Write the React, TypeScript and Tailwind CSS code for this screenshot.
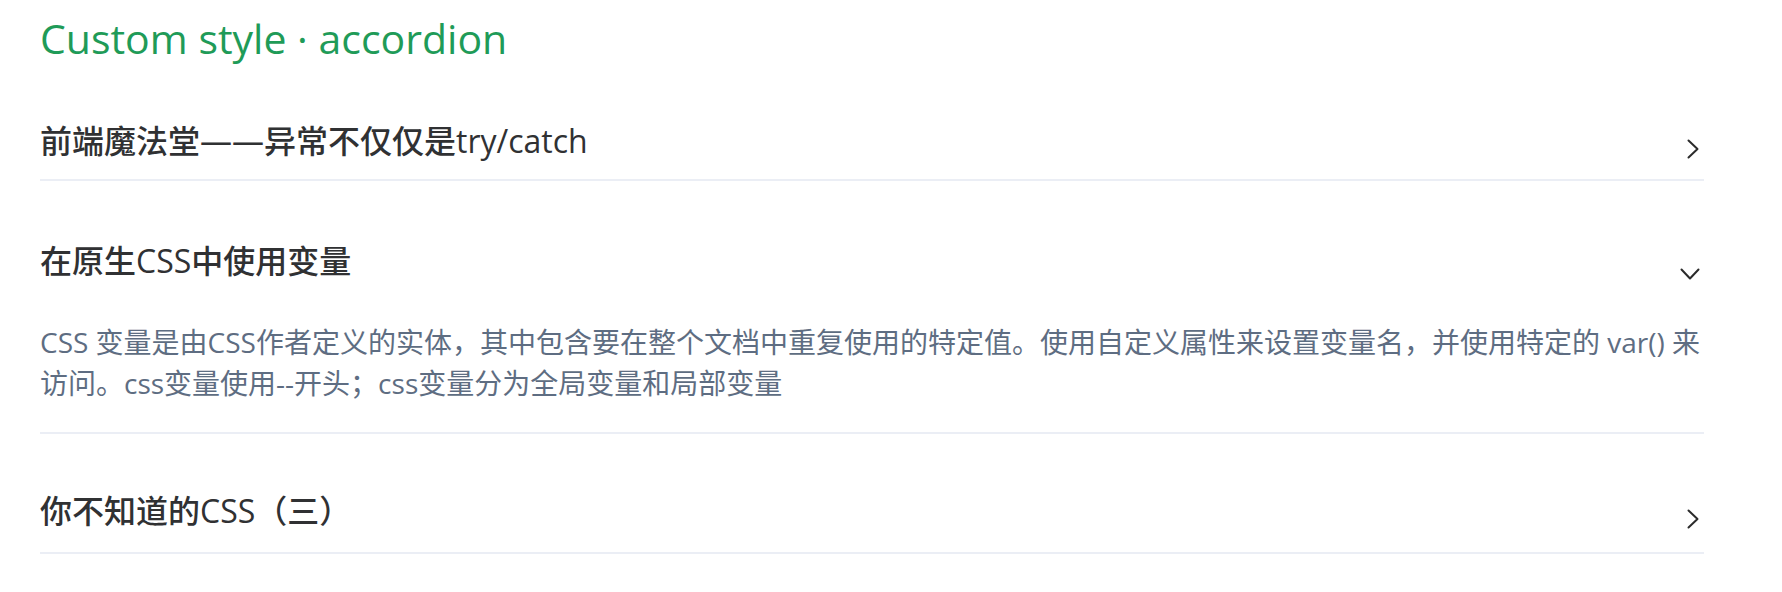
import React, { useState } from "react";

const FONT = '"Open Sans", "Noto Sans CJK SC", sans-serif';

type Item = { title: string; content?: string };

const items: Item[] = [
  { title: "前端魔法堂——异常不仅仅是try/catch", content: "" },
  {
    title: "在原生CSS中使用变量",
    content:
      "CSS 变量是由CSS作者定义的实体，其中包含要在整个文档中重复使用的特定值。使用自定义属性来设置变量名，并使用特定的 var() 来访问。css变量使用--开头；css变量分为全局变量和局部变量",
  },
  { title: "你不知道的CSS（三）", content: "" },
];

function ChevronRight() {
  return (
    <svg width="12" height="20" viewBox="0 0 12 20" fill="none" className="translate-y-[8px] mr-[5px]">
      <polyline points="1.5,1.5 10.5,10 1.5,18.5" stroke="#2b2b2b" strokeWidth="2" strokeLinecap="round" strokeLinejoin="round" />
    </svg>
  );
}

function ChevronDown() {
  return (
    <svg width="20" height="12" viewBox="0 0 20 12" fill="none" className="translate-y-[13px] mr-[4px]">
      <polyline points="1.5,1.5 10,10.5 18.5,1.5" stroke="#2b2b2b" strokeWidth="2" strokeLinecap="round" strokeLinejoin="round" />
    </svg>
  );
}

export default function App() {
  const [open, setOpen] = useState<number>(1);
  return (
    <div className="w-[1782px] h-[592px] bg-white pl-[40px] pr-[78px] overflow-hidden" style={{ fontFamily: FONT }}>
      <h1 className="pt-[16px] text-[41px] leading-[45px] text-[#1f9b58] font-normal">Custom style · accordion</h1>
      {items.map((it, i) => (
        <div key={i} className="border-b-2 border-[#ebeef5]">
          <button
            className={
              i === items.length - 1
                ? "w-full flex items-center justify-between pt-[53px] pb-[17px] text-left cursor-pointer"
                : "w-full flex items-center justify-between pt-[56px] pb-[14px] text-left cursor-pointer"
            }
            onClick={() => setOpen(open === i ? -1 : i)}
          >
            <span className="h-[48px] flex items-center text-[32px] text-[#303133] font-medium">{it.title}</span>
            {open === i ? <ChevronDown /> : <ChevronRight />}
          </button>
          {open === i && it.content ? (
            <div className="mt-[23px] pb-[28px] text-[28px] leading-[41px] text-[#5e6d82]">{it.content}</div>
          ) : null}
        </div>
      ))}
    </div>
  );
}
